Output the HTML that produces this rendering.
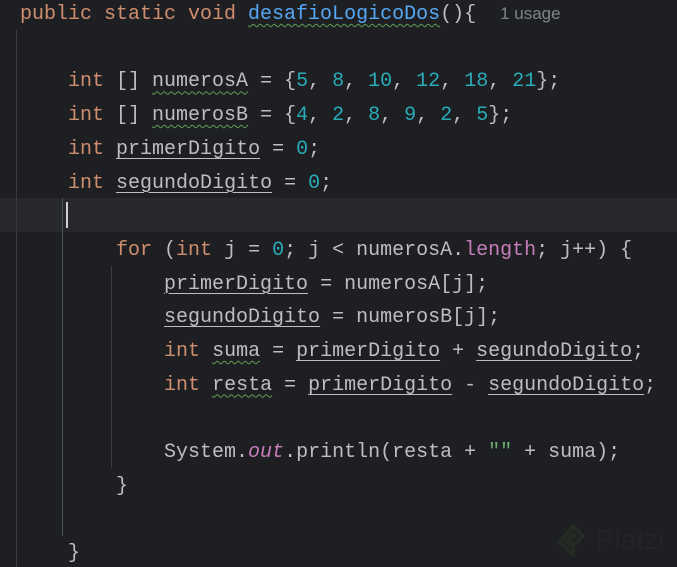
<!DOCTYPE html>
<html><head><style>
html,body{margin:0;padding:0;background:#1e1f22;width:677px;height:567px;overflow:hidden;position:relative}
.code{position:absolute;left:20px;top:-3px;font-family:"Liberation Mono",monospace;font-size:20px;line-height:33.7px;color:#bcbec4;white-space:pre;letter-spacing:0}
.k{color:#cf8e6d}.f{color:#56a8f5}.n{color:#2aacb8}.p{color:#c77dbb}.s{color:#6aab73}.i{color:#c77dbb;font-style:italic}
.w{text-decoration:underline wavy #5f9e54;text-decoration-thickness:1px;text-underline-offset:4px}
.u{text-decoration:underline #bcbec4;text-decoration-thickness:1px;text-underline-offset:4px}
.g{font-family:"Liberation Sans",sans-serif;font-size:17px;color:#7f838a}
.hl{position:absolute;left:0;top:198px;width:677px;height:34px;background:#26282e}
.vl{position:absolute;width:1px;background:#393b40}
.cur{position:absolute;left:66px;top:202px;width:2px;height:26px;background:#ced0d6}
</style></head><body>
<div class="hl"></div>
<div class="vl" style="left:16px;top:30px;height:537px"></div>
<div class="vl" style="left:62px;top:198px;height:338px;background:#4e5157"></div>
<div class="vl" style="left:111px;top:266px;height:202px"></div>
<div class="cur"></div>
<svg style="position:absolute;left:558px;top:523px" width="30" height="36" viewBox="0 0 30 36"><path d="M15 3 L25 13 L15 23 L11 19 L17 13 L15 11 L8 18 L15 25 L15 32 L2 19 Z" fill="none" stroke="#262a24" stroke-width="4" stroke-linejoin="round"/></svg>
<div style="position:absolute;left:596px;top:524px;font-family:'Liberation Sans',sans-serif;font-size:28px;color:#232428">Platzi</div>
<div class="code"><span class="k">public static void </span><span class="f w">desafioLogicoDos</span>(){  <span class="g">1 usage</span>

    <span class="k">int</span> [] <span class="w">numerosA</span> = {<span class="n">5</span>, <span class="n">8</span>, <span class="n">10</span>, <span class="n">12</span>, <span class="n">18</span>, <span class="n">21</span>};
    <span class="k">int</span> [] <span class="w">numerosB</span> = {<span class="n">4</span>, <span class="n">2</span>, <span class="n">8</span>, <span class="n">9</span>, <span class="n">2</span>, <span class="n">5</span>};
    <span class="k">int</span> <span class="u">primerDigito</span> = <span class="n">0</span>;
    <span class="k">int</span> <span class="u">segundoDigito</span> = <span class="n">0</span>;

        <span class="k">for</span> (<span class="k">int</span> j = <span class="n">0</span>; j &lt; numerosA.<span class="p">length</span>; j++) {
            <span class="u">primerDigito</span> = numerosA[j];
            <span class="u">segundoDigito</span> = numerosB[j];
            <span class="k">int</span> <span class="w">suma</span> = <span class="u">primerDigito</span> + <span class="u">segundoDigito</span>;
            <span class="k">int</span> <span class="w">resta</span> = <span class="u">primerDigito</span> - <span class="u">segundoDigito</span>;

            System.<span class="i">out</span>.println(resta + <span class="s">""</span> + suma);
        }

    }</div>
</body></html>
